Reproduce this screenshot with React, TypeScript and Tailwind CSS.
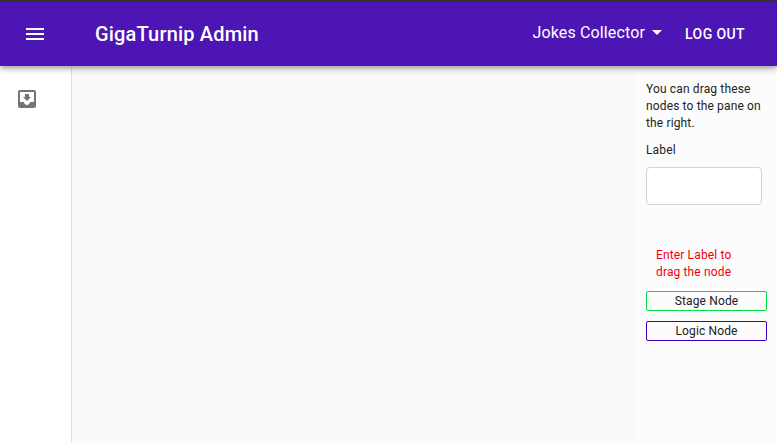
export default function App() {
  return (
    <div className="flex h-[443px] w-[777px] flex-col overflow-hidden bg-[#fafafa] font-['Roboto',sans-serif] text-[#222]">
      <header className="relative z-10 flex h-[66px] shrink-0 items-center border-t-2 border-[#323232] bg-[#4e15b5] pr-8 pl-[23px] text-white shadow-[0_2px_4px_-1px_rgba(0,0,0,0.2),0_4px_5px_0_rgba(0,0,0,0.14),0_1px_10px_0_rgba(0,0,0,0.12)]">
        <svg className="size-6" viewBox="0 0 24 24" fill="currentColor"><path d="M3 18h18v-2H3v2zm0-5h18v-2H3v2zm0-7v2h18V6H3z" /></svg>
        <h1 className="ml-12 flex-1 text-[20px] leading-8 font-medium tracking-[0.18px]">GigaTurnip Admin</h1>
        <span className="pb-[2px] text-base tracking-[0.15px]">Jokes Collector</span>
        <svg className="mb-1 size-6" viewBox="0 0 24 24" fill="currentColor"><path d="M7 10l5 5 5-5z" /></svg>
        <button className="ml-4 text-sm font-medium tracking-[0.4px]">LOG OUT</button>
      </header>
      <div className="flex flex-1">
        <aside className="w-[72px] border-r border-[#e0e0e0] bg-white pt-[21px] pl-[15px]">
          <svg className="size-6 text-[#757575]" viewBox="0 0 24 24" fill="currentColor"><path d="M19 3H4.99c-1.11 0-1.98.9-1.98 2L3 19c0 1.1.88 2 1.99 2H19c1.1 0 2-.9 2-2V5c0-1.1-.9-2-2-2zm0 12h-4c0 1.66-1.35 3-3 3s-3-1.34-3-3H4.99V5H19v10zm-3-5h-2V7h-4v3H8l4 4 4-4z" /></svg>
        </aside>
        <main className="flex-1" />
        <aside className="w-[141px] bg-[#fcfcfc] px-[10px] pt-[15px] text-xs leading-[17px] tracking-[0.14px]">
          <p className="whitespace-nowrap">You can drag these<br />nodes to the pane on<br />the right.</p>
          <label className="mt-[10px] block">Label</label>
          <input className="mt-2 block h-[38px] w-[116px] rounded border border-[#ced4da] bg-white" />
          <p className="mt-[42px] ml-[10px] whitespace-nowrap text-[#f0000c]">Enter Label to<br />drag the node</p>
          <div className="mt-[10px] flex h-5 items-center justify-center rounded-[2px] border border-[#00e045]">Stage Node</div>
          <div className="mt-[10px] flex h-5 items-center justify-center rounded-[2px] border border-[#3d00c2]">Logic Node</div>
        </aside>
      </div>
    </div>
  );
}
